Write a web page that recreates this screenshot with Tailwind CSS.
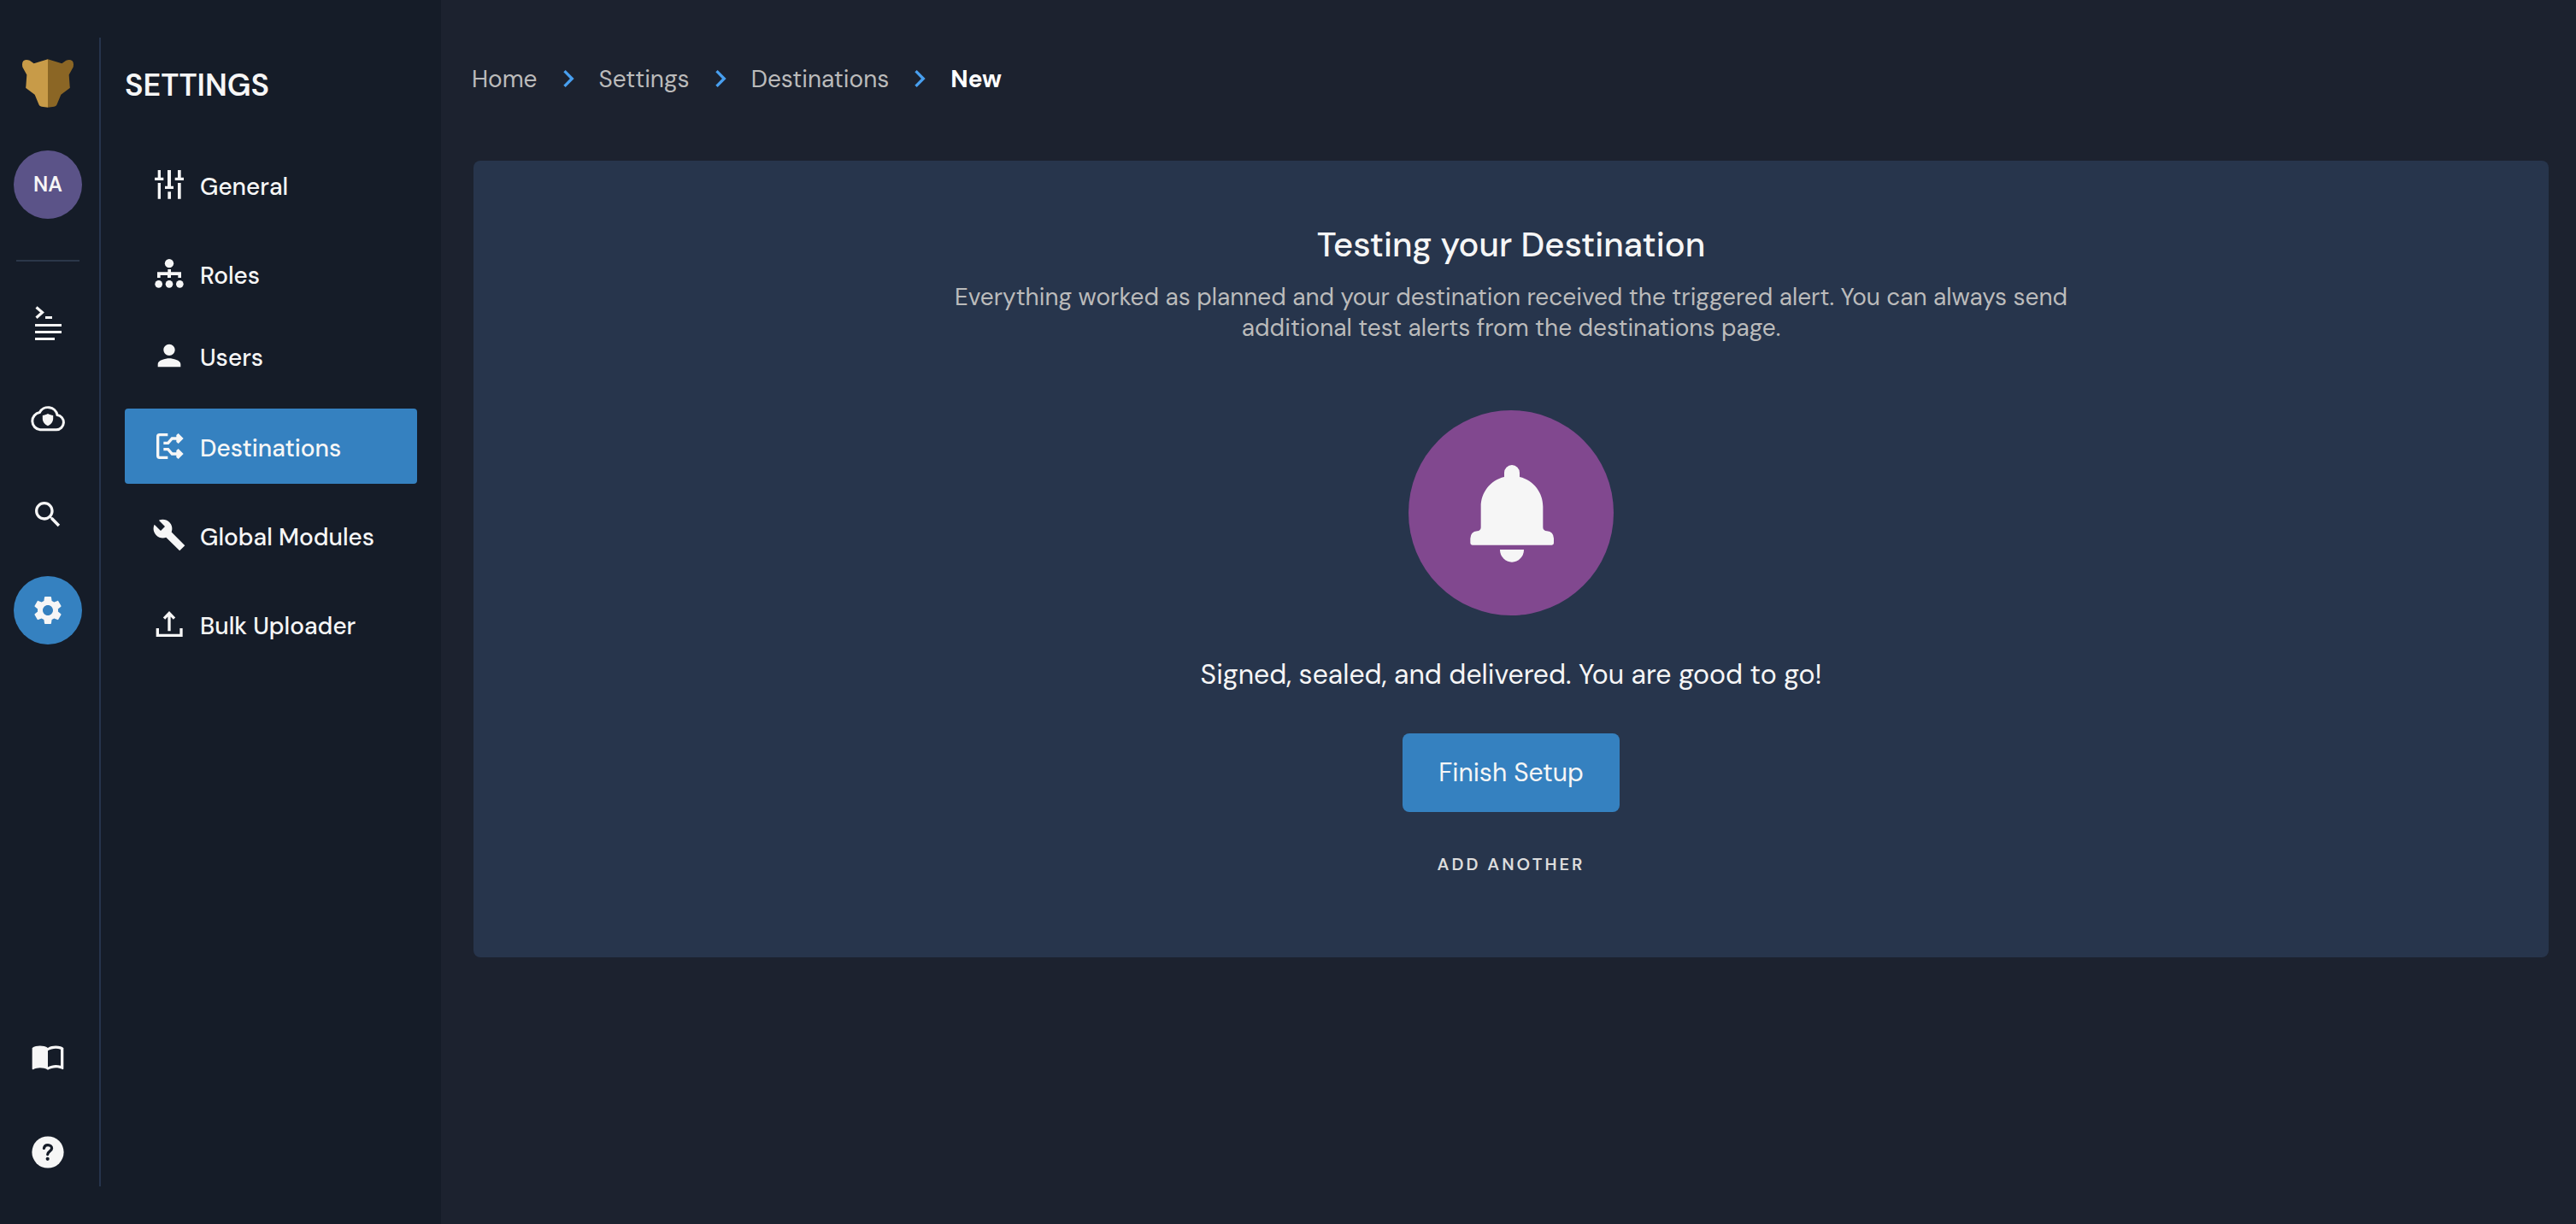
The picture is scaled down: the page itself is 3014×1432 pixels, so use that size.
<!DOCTYPE html>
<html lang="en">
<head>
<meta charset="utf-8">
<meta name="viewport" content="width=device-width, initial-scale=1">
<title>Settings – New Destination</title>
<script src="https://cdn.jsdelivr.net/npm/@tailwindcss/browser@4"></script>
</head>
<body class="flex min-h-screen bg-[#1c222f] font-['DM_Sans','Open_Sans',sans-serif] text-[28px] leading-9 text-[#f6f6f6]">

  <aside class="flex shrink-0 bg-[#151c28] py-11">
    <!-- Icon rail -->
    <nav aria-label="Primary" class="flex w-[118px] flex-col items-center border-r-2 border-[#26344c] pt-[25px] pr-5 pl-4">
      <a href="#" aria-label="Home">
        <svg class="h-[57px] w-[60px]" viewBox="78 118 180 170">
          <path fill="#c89b48" d="M168 118L119 133L104 123Q92 117 82 124Q76 130 79 146L94 173L91 214Q89 219 93 221L122 243L137 279Q139 283 146 285L168 288Z"/>
          <path fill="#8b6625" transform="translate(336 0) scale(-1 1)" d="M168 118L119 133L104 123Q92 117 82 124Q76 130 79 146L94 173L91 214Q89 219 93 221L122 243L137 279Q139 283 146 285L168 288Z"/>
        </svg>
      </a>
      <button type="button" class="mt-[50px] size-20 rounded-full bg-[#5b5388] text-2xl font-semibold">NA</button>
      <hr class="mt-12 h-0.5 w-[74px] border-0 bg-[#2b3749]">
      <ul class="mt-8 flex flex-col gap-8">
        <li><a href="#" aria-label="Log analysis" class="flex size-20 items-center justify-center rounded-full">
          <svg class="size-10" viewBox="0 0 40 40" fill="currentColor">
            <path d="M6.5 1.5L13.5 7.5L6.5 13.7" fill="none" stroke="currentColor" stroke-width="3.2"/>
            <path d="M17 12h8v3h-8zM5 21h31v3H5zM5 29h31v3H5zM5 37h23v3H5z"/>
          </svg></a></li>
        <li><a href="#" aria-label="Cloud security" class="flex size-20 items-center justify-center rounded-full">
          <svg class="size-10" viewBox="0 0 40 40" fill="currentColor">
            <path d="M11 32.8H30A8.7 8.7 0 0 0 31 15.5A11.1 11.1 0 0 0 10.3 12.6A10.2 10.2 0 0 0 11 32.8Z" fill="none" stroke="currentColor" stroke-width="3"/>
            <path d="M20 14c-2 1.2-4 1.8-6.2 2v3.5c0 4 2.4 7.2 6.2 8.7 3.8-1.5 6.2-4.7 6.2-8.7V16c-2.2-.2-4.2-.8-6.2-2z"/>
          </svg></a></li>
        <li><a href="#" aria-label="Search" class="flex size-20 items-center justify-center rounded-full">
          <svg class="size-10" viewBox="0 0 24 24" fill="currentColor"><path d="M15.5 14h-.79l-.28-.27C15.41 12.59 16 11.11 16 9.5 16 5.91 13.09 3 9.5 3S3 5.91 3 9.5 5.91 16 9.5 16c1.61 0 3.09-.59 4.23-1.57l.27.28v.79l5 4.99L20.49 19l-4.99-5zm-6 0C7.01 14 5 11.99 5 9.5S7.01 5 9.5 5 14 7.01 14 9.5 11.99 14 9.5 14z"/></svg></a></li>
        <li><a href="#" aria-label="Settings" aria-current="page" class="flex size-20 items-center justify-center rounded-full bg-[#3581c0]">
          <svg class="size-10" viewBox="0 0 24 24" fill="currentColor"><path d="M19.14 12.94c.04-.3.06-.61.06-.94 0-.32-.02-.64-.07-.94l2.03-1.58c.18-.14.23-.41.12-.61l-1.92-3.32c-.12-.22-.37-.29-.59-.22l-2.39.96c-.5-.38-1.03-.7-1.62-.94l-.36-2.54c-.04-.24-.24-.41-.48-.41h-3.84c-.24 0-.43.17-.47.41l-.36 2.54c-.59.24-1.13.57-1.62.94l-2.39-.96c-.22-.08-.47 0-.59.22L2.74 8.87c-.12.21-.08.47.12.61l2.03 1.58c-.05.3-.09.63-.09.94s.02.64.07.94l-2.03 1.58c-.18.14-.23.41-.12.61l1.92 3.32c.12.22.37.29.59.22l2.39-.96c.5.38 1.03.7 1.62.94l.36 2.54c.05.24.24.41.48.41h3.84c.24 0 .44-.17.47-.41l.36-2.54c.59-.24 1.13-.56 1.62-.94l2.39.96c.22.08.47 0 .59-.22l1.92-3.32c.12-.22.07-.47-.12-.61l-2.01-1.58zM12 15.6c-1.98 0-3.6-1.62-3.6-3.6s1.62-3.6 3.6-3.6 3.6 1.62 3.6 3.6-1.62 3.6-3.6 3.6z"/></svg></a></li>
      </ul>
      <ul class="mt-auto flex flex-col gap-8">
        <li><a href="#" aria-label="Documentation" class="flex size-20 items-center justify-center rounded-full">
          <svg class="size-10" viewBox="0 0 24 24" fill="currentColor"><path d="M21 5c-1.11-.35-2.33-.5-3.5-.5-1.95 0-4.05.4-5.5 1.5-1.45-1.1-3.55-1.5-5.5-1.5S2.45 4.9 1 6v14.65c0 .25.25.5.5.5.1 0 .15-.05.25-.05C3.1 20.45 5.05 20 6.5 20c1.95 0 4.05.4 5.5 1.5 1.35-.85 3.8-1.5 5.5-1.5 1.65 0 3.35.3 4.75 1.05.1.05.15.05.25.05.25 0 .5-.25.5-.5V6c-.6-.45-1.25-.75-2-1zm0 13.5c-1.1-.35-2.3-.5-3.5-.5-1.7 0-4.15.65-5.5 1.5V8c1.35-.85 3.8-1.5 5.5-1.5 1.2 0 2.4.15 3.5.5v11.5z"/></svg></a></li>
        <li><a href="#" aria-label="Help" class="flex size-20 items-center justify-center rounded-full">
          <svg class="size-10" viewBox="0 0 40 40">
            <circle cx="20" cy="20" r="18.6" fill="currentColor"/>
            <path d="M15.4 15.4C15.8 13 17.6 11.6 20 11.6C22.6 11.6 24.6 13.3 24.6 15.6C24.6 18.6 20 19 19.7 22.6" fill="none" stroke="#151c28" stroke-width="3.2" stroke-linecap="round"/>
            <circle cx="19.7" cy="27.8" r="2.1" fill="#151c28"/>
          </svg></a></li>
      </ul>
    </nav>

    <!-- Settings menu -->
    <nav aria-label="Settings" class="flex w-[398px] flex-col px-7 pt-[34px]">
      <h2 class="text-4xl leading-11 font-semibold">SETTINGS</h2>
      <ul class="mt-[50px] flex flex-col gap-4 font-medium">
        <li><a href="#" class="flex h-[88px] items-center gap-4 rounded px-8">
          <svg class="size-10" viewBox="534 498 120 120" fill="currentColor"><path d="M554 507h10v26h10v10h-31v-10h11zM554 552h10v56h-10zM588 507h12v56h9v10h-30v-10h9zM589 583h11v25h-11zM624 507h11v26h10v10h-31v-10h10zM624 552h11v56h-11z"/></svg>
          <span class="pt-1.5">General</span></a></li>
        <li><a href="#" class="flex h-[88px] items-center gap-4 rounded px-8">
          <svg class="size-10" viewBox="534 810 120 120" fill="currentColor"><circle cx="594" cy="834.5" r="15.5"/><path d="M589 855h11v10h36v20h-11v-9h-25v9h-12v-9h-25v9h-11v-20h37z"/><circle cx="557" cy="907" r="13"/><circle cx="594" cy="907" r="13"/><circle cx="631" cy="907" r="13"/></svg>
          <span class="pt-1.5">Roles</span></a></li>
        <li><a href="#" class="flex h-[82px] items-center gap-4 rounded px-8 pb-2.5">
          <svg class="size-10" viewBox="0 0 24 24" fill="currentColor"><path d="M12 12c2.21 0 4-1.79 4-4s-1.79-4-4-4-4 1.79-4 4 1.79 4 4 4zm0 2c-2.67 0-8 1.34-8 4v2h16v-2c0-2.66-5.33-4-8-4z"/></svg>
          <span class="pt-1.5">Users</span></a></li>
        <li><a href="#" aria-current="page" class="flex h-[88px] items-center gap-4 rounded bg-[#3581c0] px-8">
          <svg class="size-10" viewBox="534 546 120 120" fill="none" stroke="currentColor" stroke-width="10"><path d="M589 566H560Q554 566 554 572V640Q554 646 560 646H589"/><path d="M574 595H590L604 579H626M574 617H590L604 633H626"/><path fill="currentColor" stroke="none" d="M619 567L626 561L644 579L626 597L619 591zM619 621L626 615L644 633L626 651L619 645z"/></svg>
          <span class="pt-1.5">Destinations</span></a></li>
        <li><a href="#" class="flex h-[88px] items-center gap-4 rounded px-8">
          <svg class="size-10" viewBox="0 0 24 24" fill="currentColor"><path d="M23 19.3l-9.4-9.4c.9-2.3.4-5-1.5-6.9-2-2-5-2.4-7.4-1.3L9 6 6 9 1.6 4.7C.4 7.1.9 10.1 2.9 12.1c1.9 1.9 4.6 2.4 6.9 1.5l9.5 9.4z"/></svg>
          <span class="pt-1.5">Global Modules</span></a></li>
        <li><a href="#" class="flex h-[88px] items-center gap-4 rounded px-8">
          <svg class="size-10" viewBox="534 450 120 120" fill="none" stroke="currentColor" stroke-width="10"><path d="M553 525V550H636V525M594 535V474M576 491L594 472L612 491"/></svg>
          <span class="pt-1.5">Bulk Uploader</span></a></li>
      </ul>
    </nav>
  </aside>

  <main class="min-w-0 flex-1 pt-[72px] pr-8 pb-8 pl-9">
    <nav aria-label="Breadcrumb">
      <ol class="flex h-10 items-center gap-4 text-[#bbbbbb]">
        <li class="pt-0.5"><a href="#">Home</a></li>
        <li aria-hidden="true" class="text-[#489fef]"><svg class="size-10" viewBox="0 0 24 24" fill="currentColor"><path d="M10 6L8.59 7.41 13.17 12l-4.58 4.59L10 18l6-6z"/></svg></li>
        <li class="pt-0.5"><a href="#">Settings</a></li>
        <li aria-hidden="true" class="text-[#489fef]"><svg class="size-10" viewBox="0 0 24 24" fill="currentColor"><path d="M10 6L8.59 7.41 13.17 12l-4.58 4.59L10 18l6-6z"/></svg></li>
        <li class="pt-0.5"><a href="#">Destinations</a></li>
        <li aria-hidden="true" class="text-[#489fef]"><svg class="size-10" viewBox="0 0 24 24" fill="currentColor"><path d="M10 6L8.59 7.41 13.17 12l-4.58 4.59L10 18l6-6z"/></svg></li>
        <li class="pt-0.5"><a href="#" aria-current="page" class="font-bold text-white">New</a></li>
      </ol>
    </nav>

    <section class="mt-[76px] ml-0.5 flex flex-col items-center rounded-lg bg-[#27354c] px-8 pt-[74px] pb-[92px] text-center">
      <h1 class="text-[40px] leading-12 font-medium">Testing your Destination</h1>
      <p class="mt-5 max-w-[1360px] text-[#bbbbbb]">Everything worked as planned and your destination received the triggered alert. You can always send additional test alerts from the destinations page.</p>
      <svg class="mt-[78px] size-60 rounded-full bg-[#81488f]" viewBox="144 60 720 720" fill="currentColor" aria-hidden="true">
        <path d="M480 294V279A27 27 0 0 1 534 279V294C584 306 616 350 616 398V472Q617 483 630 484Q653 486 654 510V526Q654 533 647 533H368Q361 533 361 526V510Q362 486 385 484Q397 483 398 472V398C398 350 430 306 480 294Z"/>
        <path d="M465 549H549A42 44 0 0 1 465 549Z"/>
      </svg>
      <p class="mt-12 text-[32px] leading-[42px]">Signed, sealed, and delivered. You are good to go!</p>
      <button type="button" class="mt-12 h-[92px] rounded-lg bg-[#3581c0] px-[42px] text-[30px]">Finish Setup</button>
      <button type="button" class="mt-11 h-[34px] text-xl font-semibold tracking-[3px] text-[#dddddd]">ADD ANOTHER</button>
    </section>
  </main>
</body>
</html>
